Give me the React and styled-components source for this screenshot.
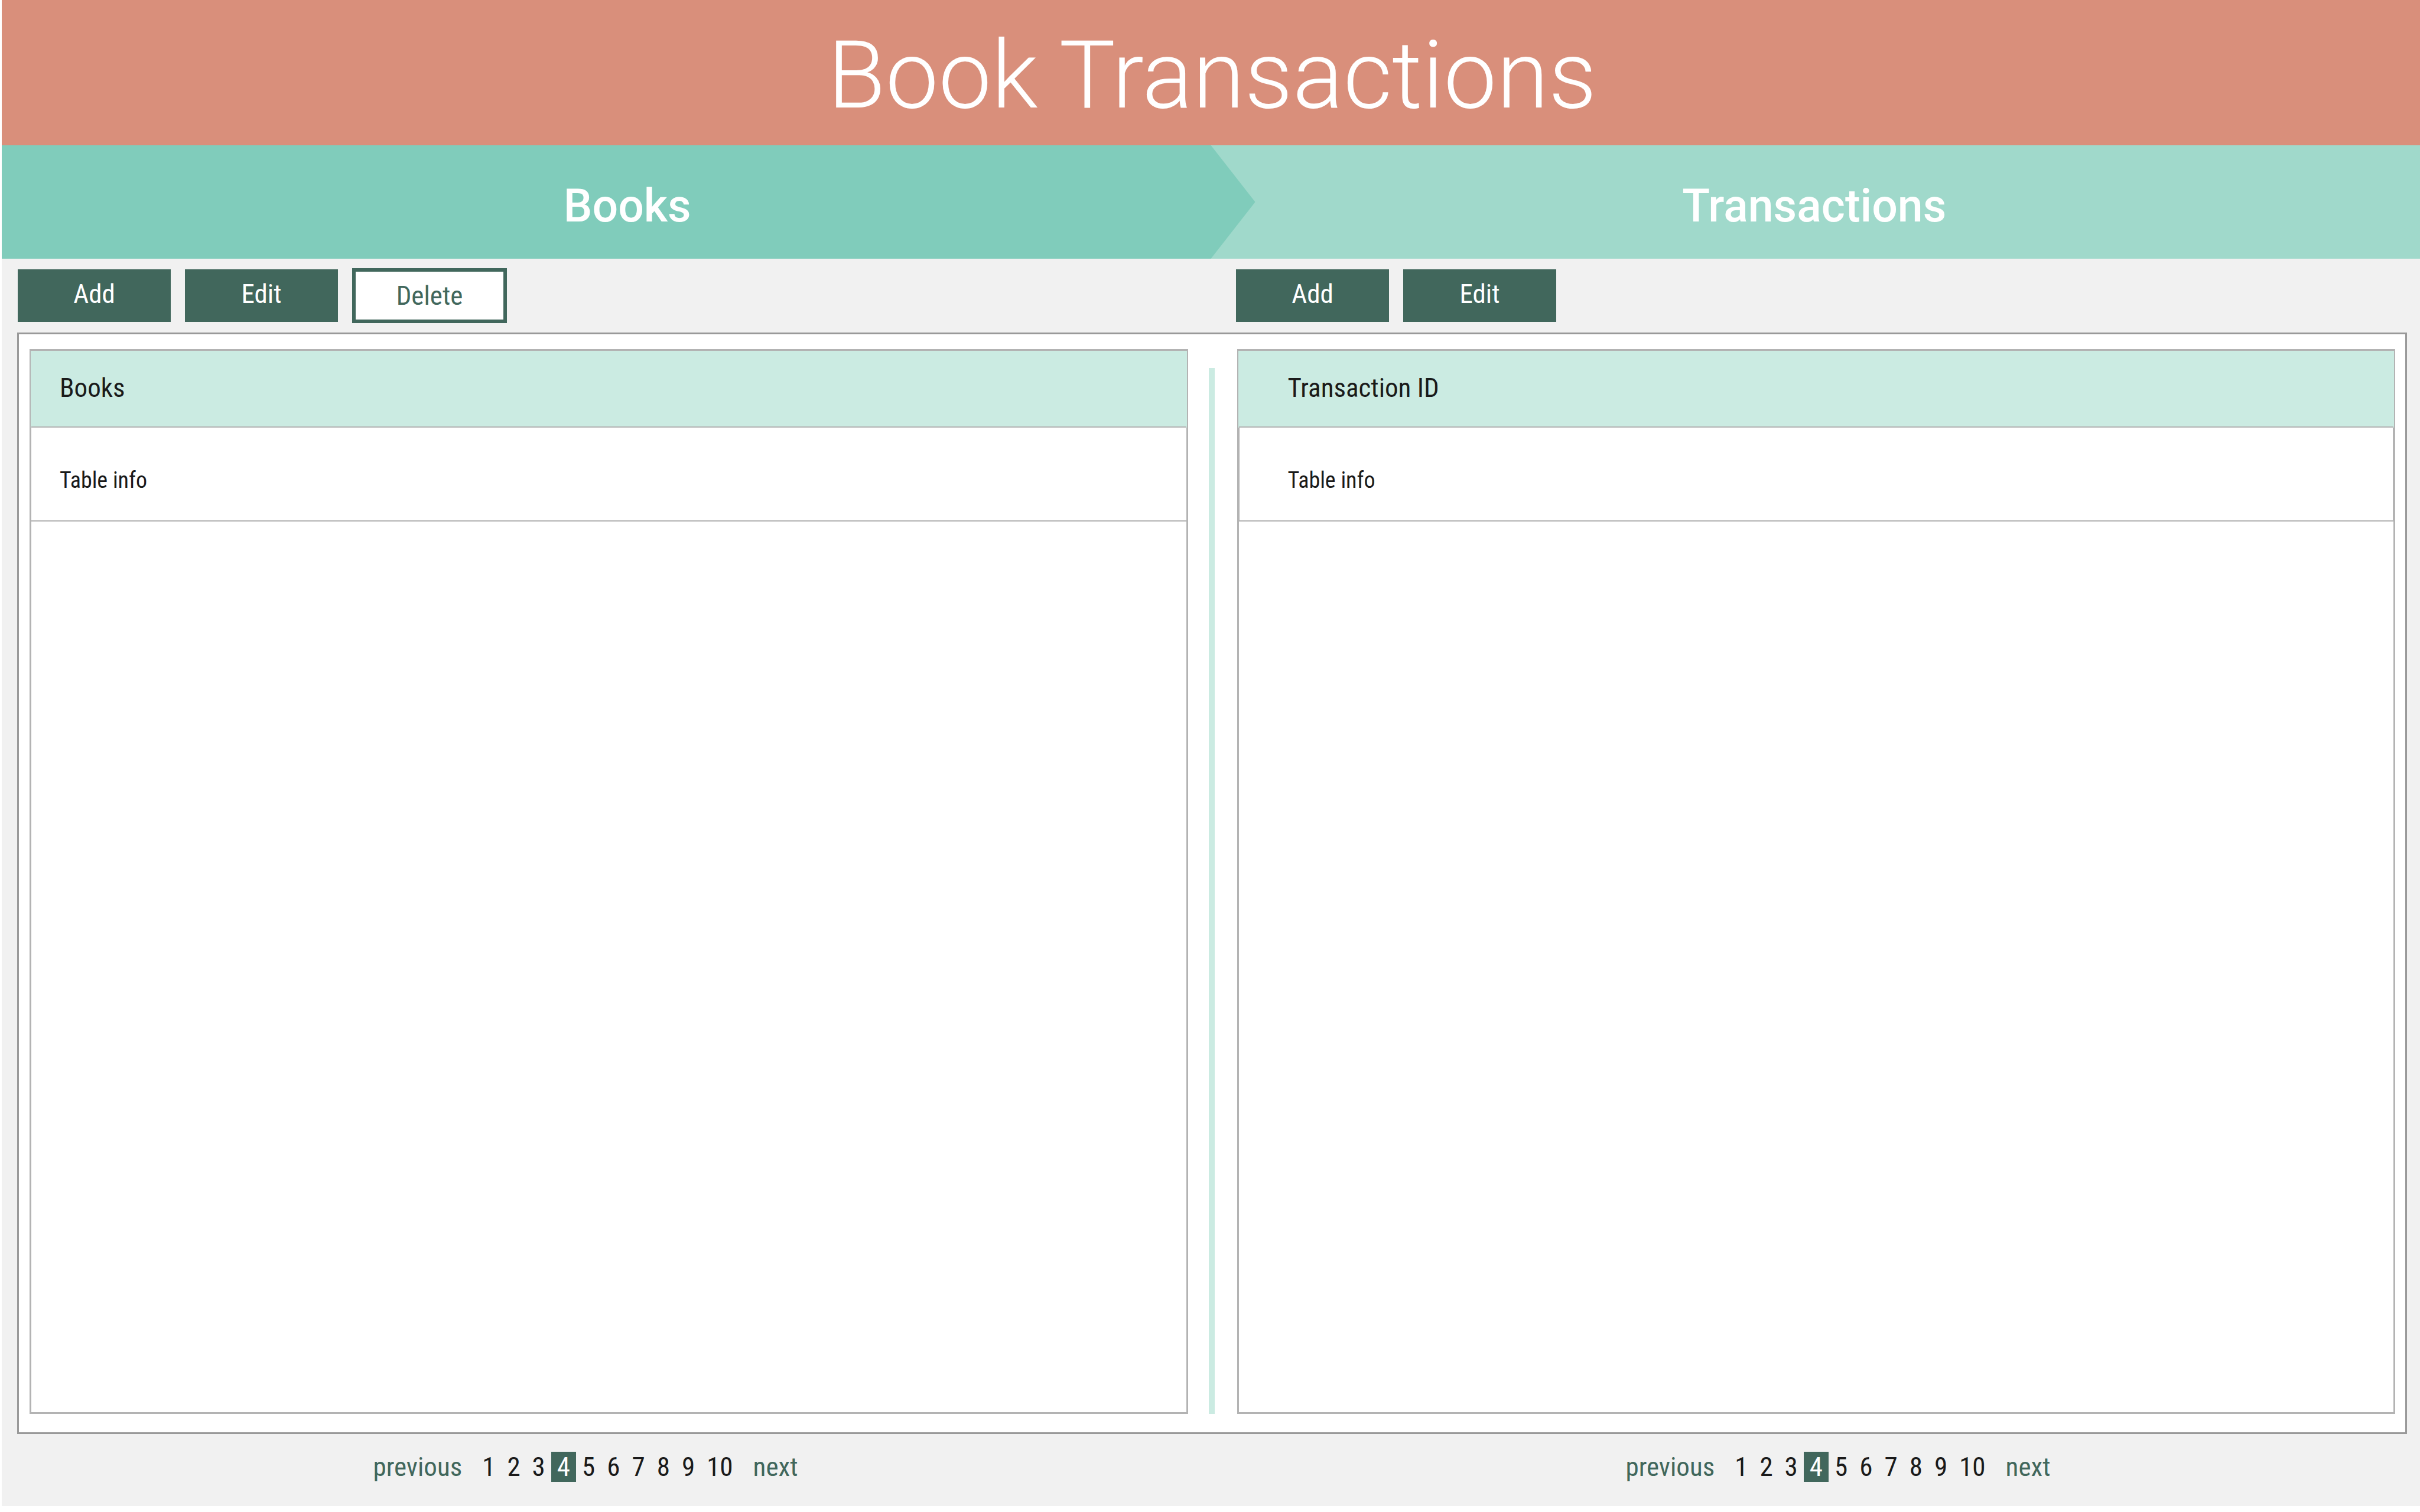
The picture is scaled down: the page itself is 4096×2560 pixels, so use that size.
import React from "react";
import styled, { createGlobalStyle, css } from "styled-components";

const GlobalStyle = createGlobalStyle`
  *, *::before, *::after { box-sizing: border-box; }
  body { margin: 0; background: #ffffff; }
`;

const condensed = `"Roboto Condensed", Roboto, "Liberation Sans Narrow", sans-serif`;
const regular = `Roboto, "Liberation Sans", sans-serif`;

const Page = styled.div`
  min-height: 100vh;
  display: flex;
  flex-direction: column;
  padding: 0 0 10px 3px;
  font-family: ${condensed};
  color: #1a1a1a;
`;

const Header = styled.header`
  display: flex;
  justify-content: center;
  background: #d98f7b;
  padding: 36px 0 26px 4px;
`;

const Title = styled.h1`
  margin: 0;
  font: 300 160px/184px ${regular};
  color: #ffffff;
`;

const Steps = styled.div`
  display: grid;
  grid-template-columns: 1fr 1fr;
  background: #a0d9cb;
`;

const Step = styled.h2`
  margin: 0;
  padding: 55px 4px 41px 0;
  font: 500 77px/96px ${regular};
  text-align: center;
  color: #ffffff;
  ${({ $current }) =>
    $current &&
    css`
      background: #80ccbb;
      margin-right: -75px;
      clip-path: polygon(0 0, calc(100% - 75px) 0, 100% 50%, calc(100% - 75px) 100%, 0 100%);
    `}
`;

const Body = styled.main`
  flex: 1;
  display: flex;
  flex-direction: column;
  background: #f1f1f1;
`;

const Toolbars = styled.div`
  display: grid;
  grid-template-columns: 1fr 1fr;
  column-gap: 80px;
  padding: 16px 22px 16px 27px;
`;

const Toolbar = styled.div`
  display: flex;
  align-items: center;
  gap: 24px;
  height: 93px;
`;

const Button = styled.button`
  width: 259px;
  height: 89px;
  padding: 0 0 5px;
  border: 0;
  background: #41675c;
  color: #ffffff;
  font: 400 45px/52px ${condensed};
  ${({ $outlined }) =>
    $outlined &&
    css`
      width: 262px;
      height: 93px;
      padding: 0;
      border: 6px solid #41675c;
      background: #ffffff;
      color: #41675c;
    `}
`;

const Frame = styled.div`
  flex: 1;
  display: flex;
  margin: 0 22px 0 26px;
  padding: 25px 17px 31px 18px;
  border: 3px solid #999999;
  background: #ffffff;
`;

const Panel = styled.section`
  flex: 1;
  border: 3px solid #b3b3b3;
`;

const Divider = styled.div`
  width: 10px;
  margin: 32px 38px 0 35px;
  background: #cbebe2;
`;

const Table = styled.table`
  width: 100%;
  border-collapse: separate;
  border-spacing: 0;
  text-align: left;
`;

const HeadCell = styled.th`
  height: 130px;
  padding: 0 0 3px ${({ $indent }) => $indent};
  border-bottom: 2px solid #b3b3b3;
  background: #cbebe2;
  box-shadow: -1px 0 #cbebe2, 1px 0 #cbebe2;
  font: 400 45px/52px ${condensed};
`;

const Cell = styled.td`
  height: 159px;
  padding: 20px 0 0 ${({ $indent }) => $indent};
  border-bottom: 2px solid #b3b3b3;
  box-shadow: ${({ $boxed }) => ($boxed ? "inset 1px 0 #b3b3b3, inset -1px 0 #b3b3b3" : "none")};
  font: 400 38px/44px ${condensed};
`;

const Footer = styled.footer`
  display: grid;
  grid-template-columns: 1fr 1fr;
  column-gap: 150px;
  padding: 30px 0 41px 3px;
`;

const Pagination = styled.nav`
  display: flex;
  justify-content: center;
  align-items: center;
  font-size: 45px;
  line-height: 51px;
`;

const PageLink = styled.a`
  padding: 0 10px;
  text-decoration: none;
  color: ${({ $current }) => ($current ? "#ffffff" : "#1a1a1a")};
  background: ${({ $current }) => ($current ? "#41675c" : "transparent")};
`;

const StepLink = styled.a`
  padding: 0 24px;
  text-decoration: none;
  color: #41675c;
`;

const pages = [1, 2, 3, 4, 5, 6, 7, 8, 9, 10];

function Pager({ label, current }) {
  return (
    <Pagination aria-label={label}>
      <StepLink href="#previous">previous</StepLink>
      {pages.map((n) => (
        <PageLink key={n} href={`#page-${n}`} $current={n === current}>
          {n}
        </PageLink>
      ))}
      <StepLink href="#next">next</StepLink>
    </Pagination>
  );
}

function DataPanel({ heading, rows, indent, boxed }) {
  return (
    <Panel>
      <Table>
        <thead>
          <tr>
            <HeadCell scope="col" $indent={indent}>{heading}</HeadCell>
          </tr>
        </thead>
        <tbody>
          {rows.map((row) => (
            <tr key={row}>
              <Cell $indent={indent} $boxed={boxed}>{row}</Cell>
            </tr>
          ))}
        </tbody>
      </Table>
    </Panel>
  );
}

export default function App() {
  return (
    <>
      <GlobalStyle />
      <Page>
        <Header>
          <Title>Book Transactions</Title>
        </Header>
        <Steps>
          <Step $current>Books</Step>
          <Step>Transactions</Step>
        </Steps>
        <Body>
          <Toolbars>
            <Toolbar>
              <Button type="button">Add</Button>
              <Button type="button">Edit</Button>
              <Button type="button" $outlined>Delete</Button>
            </Toolbar>
            <Toolbar>
              <Button type="button">Add</Button>
              <Button type="button">Edit</Button>
            </Toolbar>
          </Toolbars>
          <Frame>
            <DataPanel heading="Books" rows={["Table info"]} indent="48px" />
            <Divider />
            <DataPanel heading="Transaction ID" rows={["Table info"]} indent="83px" boxed />
          </Frame>
          <Footer>
            <Pager label="Books pages" current={4} />
            <Pager label="Transactions pages" current={4} />
          </Footer>
        </Body>
      </Page>
    </>
  );
}
